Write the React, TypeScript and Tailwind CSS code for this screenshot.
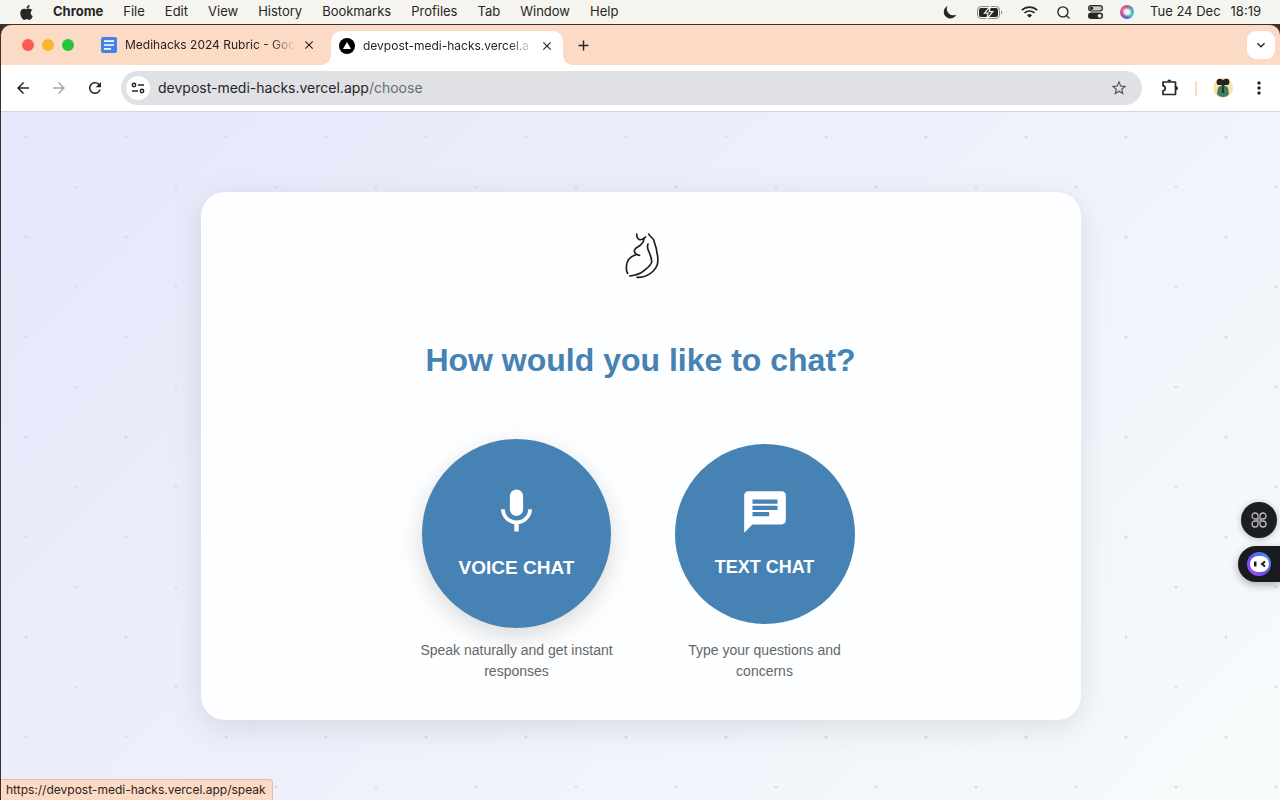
import { ReactNode } from "react";
import { MdMic, MdChat, MdStarBorder, MdMoreVert, MdArrowBack, MdArrowForward, MdRefresh, MdAdd, MdClose, MdKeyboardArrowDown } from "react-icons/md";
import { FaApple } from "react-icons/fa";
import { Search } from "lucide-react";

const menuItems = ["File", "Edit", "View", "History", "Bookmarks", "Profiles", "Tab", "Window", "Help"];

function MenuBar() {
    return (
        <header className="flex h-6 items-center bg-[#f5f4ef] pl-[18px] pr-[19px] text-[13px] text-[#262626]">
            <FaApple className="mr-[18px] size-[17px]" />
            <nav className="flex items-center gap-5 whitespace-nowrap">
                <span className="font-bold">Chrome</span>
                {menuItems.map((item) => (
                    <span key={item}>{item}</span>
                ))}
            </nav>
            <div className="ml-auto flex items-center whitespace-nowrap">
                <svg className="mr-5 size-[14px]" viewBox="0 0 14 14">
                    <path d="M4.600 1A6.500 6.500 0 1 0 13.300 9.400 6.300 6.300 0 0 1 4.600 1z" fill="#262626" />
                </svg>
                <svg className="mr-[18px] h-[13px] w-[26px]" viewBox="0 0 26 13">
                    <rect x="0.5" y="0.5" width="22" height="12" rx="3.5" fill="none" stroke="#8c8c88" />
                    <rect x="2" y="2" width="19" height="9" rx="2" fill="#262626" />
                    <path d="M13.5 0 7.5 7.2h3.6L9.8 13l6-7.4h-3.6z" fill="#262626" stroke="#f5f4ef" strokeWidth="1.2" />
                    <path d="M24 4.5c1.6.6 1.6 3.4 0 4z" fill="#8c8c88" />
                </svg>
                <svg className="mr-[18px] h-3 w-[17px]" viewBox="0 0 17 12" fill="none" stroke="#262626" strokeWidth="1.7">
                    <path d="M.8 4.200a11 11 0 0 1 15.400 0M3.500 7a7.200 7.200 0 0 1 10 0" />
                    <path d="M8.500 11.800 6 9.300a3.600 3.600 0 0 1 5 0z" fill="#262626" stroke="none" />
                </svg>
                <Search className="mr-[17px] size-[15px]" strokeWidth={2.2} />
                <svg className="mr-[17px] h-[14px] w-[15px]" viewBox="0 0 15 14">
                    <rect x="0.6" y="0.6" width="13.8" height="5.4" rx="2.7" fill="#c9c9c5" stroke="#262626" strokeWidth="1.1" />
                    <circle cx="3.5" cy="3.3" r="1.7" fill="#262626" />
                    <rect x="0" y="7.6" width="15" height="6.4" rx="3.2" fill="#262626" />
                    <circle cx="11.6" cy="10.8" r="1.9" fill="#f5f4ef" />
                </svg>
                <span className="mr-4 flex size-[14px] items-center justify-center rounded-full bg-[conic-gradient(#c0507e,#38a8c4,#3fd0c0,#5a55c8,#a04ba5,#f05a80,#c0507e)]">
                    <span className="size-[6px] rounded-full bg-white/90 shadow-[0_0_2px_1px_#ffffffaa]" />
                </span>
                <span className="mr-[10px]">Tue 24 Dec</span>
                <span>18:19</span>
            </div>
        </header>
    );
}

function TabStrip() {
    return (
        <div className="flex h-10 items-end bg-[#fbdac6] pr-[5px] text-xs text-[#2b2320]">
            <div className="flex h-10 items-center gap-2 pl-[21px]">
                <span className="size-3 rounded-full bg-[#fb5b53]" />
                <span className="size-3 rounded-full bg-[#fcb62b]" />
                <span className="size-3 rounded-full bg-[#22c63d]" />
            </div>
            <div className="flex h-10 w-[257px] shrink-0 items-center pl-[27px]">
                <svg className="mr-2 size-4 shrink-0" viewBox="0 0 16 16">
                    <rect width="16" height="16" rx="2" fill="#4481ee" />
                    <path d="M3 4.2h10M3 8h10M3 11.8h7" stroke="#fff" strokeWidth="1.7" />
                </svg>
                <span className="w-[170px] whitespace-nowrap [mask-image:linear-gradient(to_right,#000_86%,transparent)]">
                    Medihacks 2024 Rubric - Goo
                </span>
                <button type="button" aria-label="Close tab" className="ml-[7px]">
                    <MdClose className="size-[14px]" />
                </button>
            </div>
            <div className="relative flex h-[34px] w-[232px] shrink-0 items-center rounded-t-[10px] bg-white pb-[5px] pl-2 pr-[9px]">
                <span className="absolute bottom-0 -left-[10px] size-[10px] bg-[radial-gradient(circle_at_0_0,transparent_10px,#fff_10px)]" />
                <span className="absolute bottom-0 -right-[10px] size-[10px] bg-[radial-gradient(circle_at_100%_0,transparent_10px,#fff_10px)]" />
                <svg className="mr-2 size-4 shrink-0" viewBox="0 0 16 16">
                    <circle cx="8" cy="8" r="8" fill="#000" />
                    <path d="M8 4 12 11H4z" fill="#fff" />
                </svg>
                <span className="w-[170px] whitespace-nowrap [mask-image:linear-gradient(to_right,#000_86%,transparent)]">
                    devpost-medi-hacks.vercel.a
                </span>
                <button type="button" aria-label="Close tab" className="ml-auto">
                    <MdClose className="size-[14px]" />
                </button>
            </div>
            <button type="button" aria-label="New tab" className="ml-3 flex h-10 items-center">
                <MdAdd className="size-[17px]" />
            </button>
            <div className="ml-auto flex h-10 items-center">
                <button type="button" aria-label="Search tabs" className="flex size-7 items-center justify-center rounded-[9px] bg-white">
                    <MdKeyboardArrowDown className="size-4" />
                </button>
            </div>
        </div>
    );
}

function Toolbar() {
    return (
        <div className="flex h-[47px] items-center border-b border-[#d5d6dc] bg-white pl-[13px] pr-[11px] text-[#262626]">
            <button type="button" aria-label="Back" className="mr-[18px]">
                <MdArrowBack className="size-[18px]" />
            </button>
            <button type="button" aria-label="Forward" className="mr-[18px] text-[#a8a8a8]">
                <MdArrowForward className="size-[18px]" />
            </button>
            <button type="button" aria-label="Reload" className="mr-[17px]">
                <MdRefresh className="size-[18px]" />
            </button>
            <div className="flex h-[34px] flex-1 items-center rounded-full bg-[#dfe1e4] pl-[5px] pr-[14px]">
                <span className="mr-2 flex size-6 items-center justify-center rounded-full bg-white">
                    <svg className="h-3 w-[14px]" viewBox="0 0 14 12" fill="none" stroke="#262626" strokeWidth="1.5">
                        <circle cx="3" cy="3" r="1.7" />
                        <path d="M7 3h6M1 9h6" />
                        <circle cx="11" cy="9" r="1.7" />
                    </svg>
                </span>
                <span className="text-sm text-[#262626]">
                    devpost-medi-hacks.vercel.app<span className="text-[#6a6d70]">/choose</span>
                </span>
                <button type="button" aria-label="Bookmark this page" className="ml-auto">
                    <MdStarBorder className="size-[18px] text-[#55585c]" />
                </button>
            </div>
            <button type="button" aria-label="Extensions" className="ml-[19px]">
                <svg className="size-[18px]" viewBox="0 0 18 18" fill="none" stroke="#262626" strokeWidth="1.7" strokeLinejoin="round">
                    <path d="M2 3h12.5v12.5H2v-3.700c3-.2 3-4.800 0-5z" />
                    <path d="M6.300 2.500a2 2 0 0 1 4 0zM15 7.300a2 2 0 0 1 0 4z" fill="#262626" stroke="none" />
                </svg>
            </button>
            <span className="ml-4 h-[15px] w-[2px] bg-[#fbdac6]" />
            <svg className="ml-4 size-5" viewBox="0 0 20 20">
                <circle cx="10" cy="10" r="10" fill="#fae3a8" />
                <path d="M5 10c1-3 9-3 10 0l1 6c-2 4-10 4-12 0z" fill="#417c62" />
                <path d="M4 2c2-2 4-1 6 0 2-1 5-2 6 0 1 3 0 5-2 5h-2l-2 2-2-2H6C4 7 3 5 4 2z" fill="#28231f" />
                <path d="M10 9v6" stroke="#183d33" strokeWidth="2" />
            </svg>
            <button type="button" aria-label="Chrome menu" className="ml-4">
                <MdMoreVert className="size-5" />
            </button>
        </div>
    );
}

function Logo() {
    return (
        <svg className="mx-auto size-12" viewBox="51 54 144 144" fill="none" stroke="#1b1b1f" strokeWidth="5" strokeLinecap="round" strokeLinejoin="round">
            <path d="M110 57c0 9 3 15 9 17 6 1 12-2 18-8" />
            <path d="M132 70c0 10-8 20-19 26-8 4-12 11-9 16 3 7 8 9 15 9" />
            <path d="M106 120c-16 5-26 19-27 35 0 10 1 16 4 20" />
            <path d="M89 183c19-2 33-7 44-17 11-9 21-16 22-25 1-12-6-25-10-35-3-7-3-14-1-19" />
            <path d="M146 57c3 7 12 11 15 18 6 16 10 32 12 50 2 20-1 30-13 43-12 12-30 20-49 19" />
        </svg>
    );
}

interface ChatOptionProps {
    href: string;
    description: string;
    className: string;
    children: ReactNode;
}

function ChatOption({ href, description, className, children }: ChatOptionProps) {
    return (
        <div className="flex w-[200px] flex-col items-center">
            <div className="flex h-[189px] items-center">
                <a href={href} className={`flex flex-col items-center justify-center rounded-full bg-[#4682b4] font-bold text-white ${className}`}>
                    {children}
                </a>
            </div>
            <p className="mt-3 text-center text-sm leading-[21px] text-[#666666]">{description}</p>
        </div>
    );
}

export default function App() {
    return (
        <div className="flex min-h-screen flex-col bg-[#f5f4ef] font-[Inter,sans-serif]">
            <MenuBar />
            <div className="flex flex-1 flex-col bg-[#3b302a] pl-px pt-px">
                <div className="relative flex flex-1 flex-col overflow-hidden rounded-t-[10px]">
                    <TabStrip />
                    <Toolbar />
                    <main className="flex flex-1 items-center justify-center bg-[radial-gradient(circle_at_25px_25px,#d9dbe8_1px,transparent_2px),radial-gradient(circle_at_75px_75px,#dcdeea_1px,transparent_2px),linear-gradient(135deg,#e5e7fb,#f0f3fb_60%,#f7fbfb)] bg-[size:100px_100px,100px_100px,100%_100%] font-['Liberation_Sans',sans-serif]">
                        {/* Chat choice */}
                        <section className="w-full max-w-[880px] rounded-3xl bg-[#fdfeff] px-10 pb-[38px] pt-[41px] shadow-[0_8px_32px_rgba(0,0,0,0.1)]">
                            <Logo />
                            <h1 className="my-14 text-center text-[32px] font-bold leading-[46px] text-[#4682b4]">
                                How would you like to chat?
                            </h1>
                            <div className="flex justify-center gap-12">
                                <ChatOption
                                    href="#speak"
                                    description="Speak naturally and get instant responses"
                                    className="size-[189px] shadow-[0_8px_24px_rgba(0,0,0,0.15)]"
                                >
                                    <MdMic className="mb-4 size-[53px]" />
                                    <span className="text-[19px] leading-7">VOICE CHAT</span>
                                </ChatOption>
                                <ChatOption
                                    href="#text"
                                    description="Type your questions and concerns"
                                    className="size-[180px]"
                                >
                                    <MdChat className="mb-4 size-[50px]" />
                                    <span className="text-lg leading-7">TEXT CHAT</span>
                                </ChatOption>
                            </div>
                        </section>
                    </main>

                    {/* Side assistant */}
                    <button type="button" aria-label="Shortcuts" className="absolute bottom-[262px] right-[3px] flex size-9 items-center justify-center rounded-full bg-[#1c1e21] shadow-[0_1px_6px_rgba(0,0,0,0.25)]">
                        <svg className="size-4" viewBox="0 0 16 16" fill="none" stroke="#b9bbbd" strokeWidth="1.3">
                            <path d="M7 7H4a3 3 0 1 1 3-3zM9 7h3a3 3 0 1 0-3-3zM7 9H4a3 3 0 1 0 3 3zM9 9h3a3 3 0 1 1-3 3z" />
                        </svg>
                    </button>
                    <button type="button" aria-label="Assistant" className="absolute bottom-[218px] right-0 flex h-9 w-[42px] items-center rounded-l-full bg-[#1a1b1f] pl-[9px] shadow-[0_3px_8px_rgba(0,0,0,0.3)]">
                        <svg className="size-6" viewBox="0 0 24 24">
                            <defs>
                                <linearGradient id="ring" x1="0" y1="1" x2="1" y2="0">
                                    <stop offset="0" stopColor="#c04dff" />
                                    <stop offset="0.45" stopColor="#6550e8" />
                                    <stop offset="1" stopColor="#36a5f5" />
                                </linearGradient>
                            </defs>
                            <circle cx="12" cy="12" r="12" fill="url(#ring)" />
                            <rect x="3" y="4" width="19" height="16" rx="8" fill="#fff" />
                            <path d="M7 9.500h2.500v5H7z" fill="#1a1b1f" />
                            <path d="m18 9.500-3 2.500 3 2.500" fill="none" stroke="#1a1b1f" strokeWidth="2" />
                        </svg>
                    </button>

                    {/* Link status */}
                    <div className="absolute bottom-0 left-0 h-[21px] rounded-tr border-r border-t border-[#d9bfb3] bg-[#fbdac6] pl-[5px] pr-1.5 text-xs leading-5 text-[#2b2320]">
                        https://devpost-medi-hacks.vercel.app/speak
                    </div>
                </div>
            </div>
        </div>
    );
}
